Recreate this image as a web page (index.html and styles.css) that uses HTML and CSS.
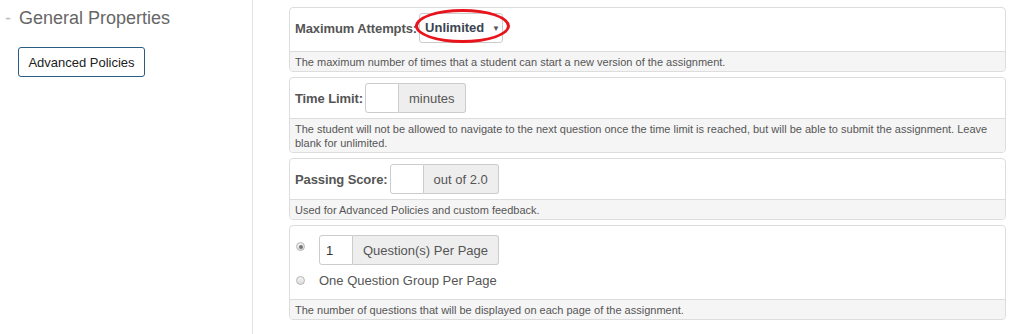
FILE: index.html
```html
<!DOCTYPE html>
<html lang="en">
<head>
    <meta charset="UTF-8">
    <title>Assignment Properties</title>
    <link rel="stylesheet" href="styles.css">
</head>
<body>
    <div class="layout">
        <div class="sidebar">
            <h2 class="section-title"><span class="dash">-</span> General Properties</h2>
            <button class="btn-outline">Advanced Policies</button>
        </div>
        <div class="content">
            <div class="panel">
                <div class="panel-body attempts">
                    <label class="field-label">Maximum Attempts:</label>
                    <span class="select-wrap">
                        <span class="select">Unlimited <span class="caret">&#9660;</span></span>
                        <span class="highlight"></span>
                    </span>
                </div>
                <div class="panel-footer">The maximum number of times that a student can start a new version of the assignment.</div>
            </div>

            <div class="panel">
                <div class="panel-body">
                    <label class="field-label">Time Limit:</label>
                    <div class="input-group">
                        <input type="text" class="small-input">
                        <span class="addon">minutes</span>
                    </div>
                </div>
                <div class="panel-footer">The student will not be allowed to navigate to the next question once the time limit is reached, but will be able to submit the assignment. Leave blank for unlimited.</div>
            </div>

            <div class="panel">
                <div class="panel-body">
                    <label class="field-label">Passing Score:</label>
                    <div class="input-group">
                        <input type="text" class="small-input">
                        <span class="addon">out of 2.0</span>
                    </div>
                </div>
                <div class="panel-footer">Used for Advanced Policies and custom feedback.</div>
            </div>

            <div class="panel">
                <div class="panel-body stacked">
                    <div class="radio-row first">
                        <input type="radio" name="paging" class="radio" checked>
                        <div class="input-group">
                            <input type="text" class="small-input" value="1">
                            <span class="addon">Question(s) Per Page</span>
                        </div>
                    </div>
                    <div class="radio-row second">
                        <input type="radio" name="paging" class="radio">
                        <span class="radio-text">One Question Group Per Page</span>
                    </div>
                </div>
                <div class="panel-footer">The number of questions that will be displayed on each page of the assignment.</div>
            </div>
        </div>
    </div>
</body>
</html>
```

FILE: styles.css
```css
body {
    font-family: "Liberation Sans", Arial, sans-serif;
    margin: 0;
    background-color: #fff;
    color: #555;
}
.layout {
    display: flex;
    height: 334px;
}
.sidebar {
    width: 253px;
    flex-shrink: 0;
    border-right: 1px solid #e3e3e3;
    padding: 7px 0 0 5px;
    box-sizing: border-box;
}
.section-title {
    font-size: 18px;
    font-weight: normal;
    color: #666;
    margin: 0 0 18px 0;
    line-height: 22px;
}
.dash {
    color: #bbb;
    margin-right: 3px;
}
.btn-outline {
    margin-left: 13px;
    font-family: inherit;
    font-size: 13px;
    color: #222;
    background: #fff;
    border: 1px solid #2a5d84;
    border-radius: 3px;
    padding: 0;
    height: 30px;
    width: 127px;
    white-space: nowrap;
}
.content {
    padding: 7px 0 0 36px;
    width: 717px;
}
.panel {
    border: 1px solid #ddd;
    border-radius: 4px;
    margin-bottom: 5px;
}
.panel-body {
    display: flex;
    align-items: center;
    padding: 5px 5px;
    min-height: 30px;
}
.panel-body.attempts {
    padding: 5px 5px 8px;
}
.panel-footer {
    background-color: #f5f5f5;
    border-top: 1px solid #ddd;
    border-radius: 0 0 4px 4px;
    font-size: 11px;
    line-height: 14px;
    padding: 3px 5px 2px;
    color: #555;
}
.field-label {
    font-size: 13px;
    font-weight: bold;
    color: #555;
    margin-right: 2px;
    letter-spacing: -0.1px;
}
.select-wrap {
    position: relative;
    display: inline-block;
}
.select {
    display: inline-block;
    border: 1px solid #ccc;
    border-radius: 3px;
    height: 30px;
    width: 84px;
    line-height: 28px;
    padding: 0 0 0 5px;
    font-size: 13px;
    font-weight: bold;
    color: #3b4350;
    box-sizing: border-box;
}
.caret {
    font-size: 8px;
    color: #555;
    margin-left: 4px;
    vertical-align: 1px;
}
.highlight {
    position: absolute;
    left: -4px;
    top: -4px;
    width: 89px;
    height: 28px;
    border: 3px solid #e8141c;
    border-radius: 50%;
}
.input-group {
    display: inline-flex;
    height: 30px;
}
.small-input {
    width: 34px;
    height: 30px;
    box-sizing: border-box;
    border: 1px solid #ccc;
    border-radius: 3px 0 0 3px;
    font-family: inherit;
    font-size: 13px;
    padding: 0 6px;
    color: #333;
    margin: 0;
}
.addon {
    display: flex;
    align-items: center;
    background-color: #eee;
    border: 1px solid #ccc;
    border-left: none;
    border-radius: 0 3px 3px 0;
    padding: 0 10px;
    font-size: 13px;
    color: #555;
}
.stacked {
    flex-direction: column;
    align-items: flex-start;
    padding: 9px 5px 7px;
}
.radio-row {
    display: flex;
    align-items: center;
    height: 30px;
}
.radio-row.first .radio {
    align-self: flex-start;
    margin-top: 7px;
}
.radio-row.second {
    margin-top: 3px;
    height: 24px;
}
.radio {
    -webkit-appearance: none;
    appearance: none;
    margin: 0 14px 0 1px;
    width: 9px;
    height: 9px;
    border: 1px solid #b5b5b5;
    border-radius: 50%;
    background: linear-gradient(#f4f4f4, #dcdcdc);
    box-sizing: border-box;
    position: relative;
}
.radio:checked::after {
    content: "";
    position: absolute;
    left: 1.5px;
    top: 1.5px;
    width: 4px;
    height: 4px;
    border-radius: 50%;
    background: #777;
}
.radio-text {
    font-size: 13px;
    color: #555;
}
```
